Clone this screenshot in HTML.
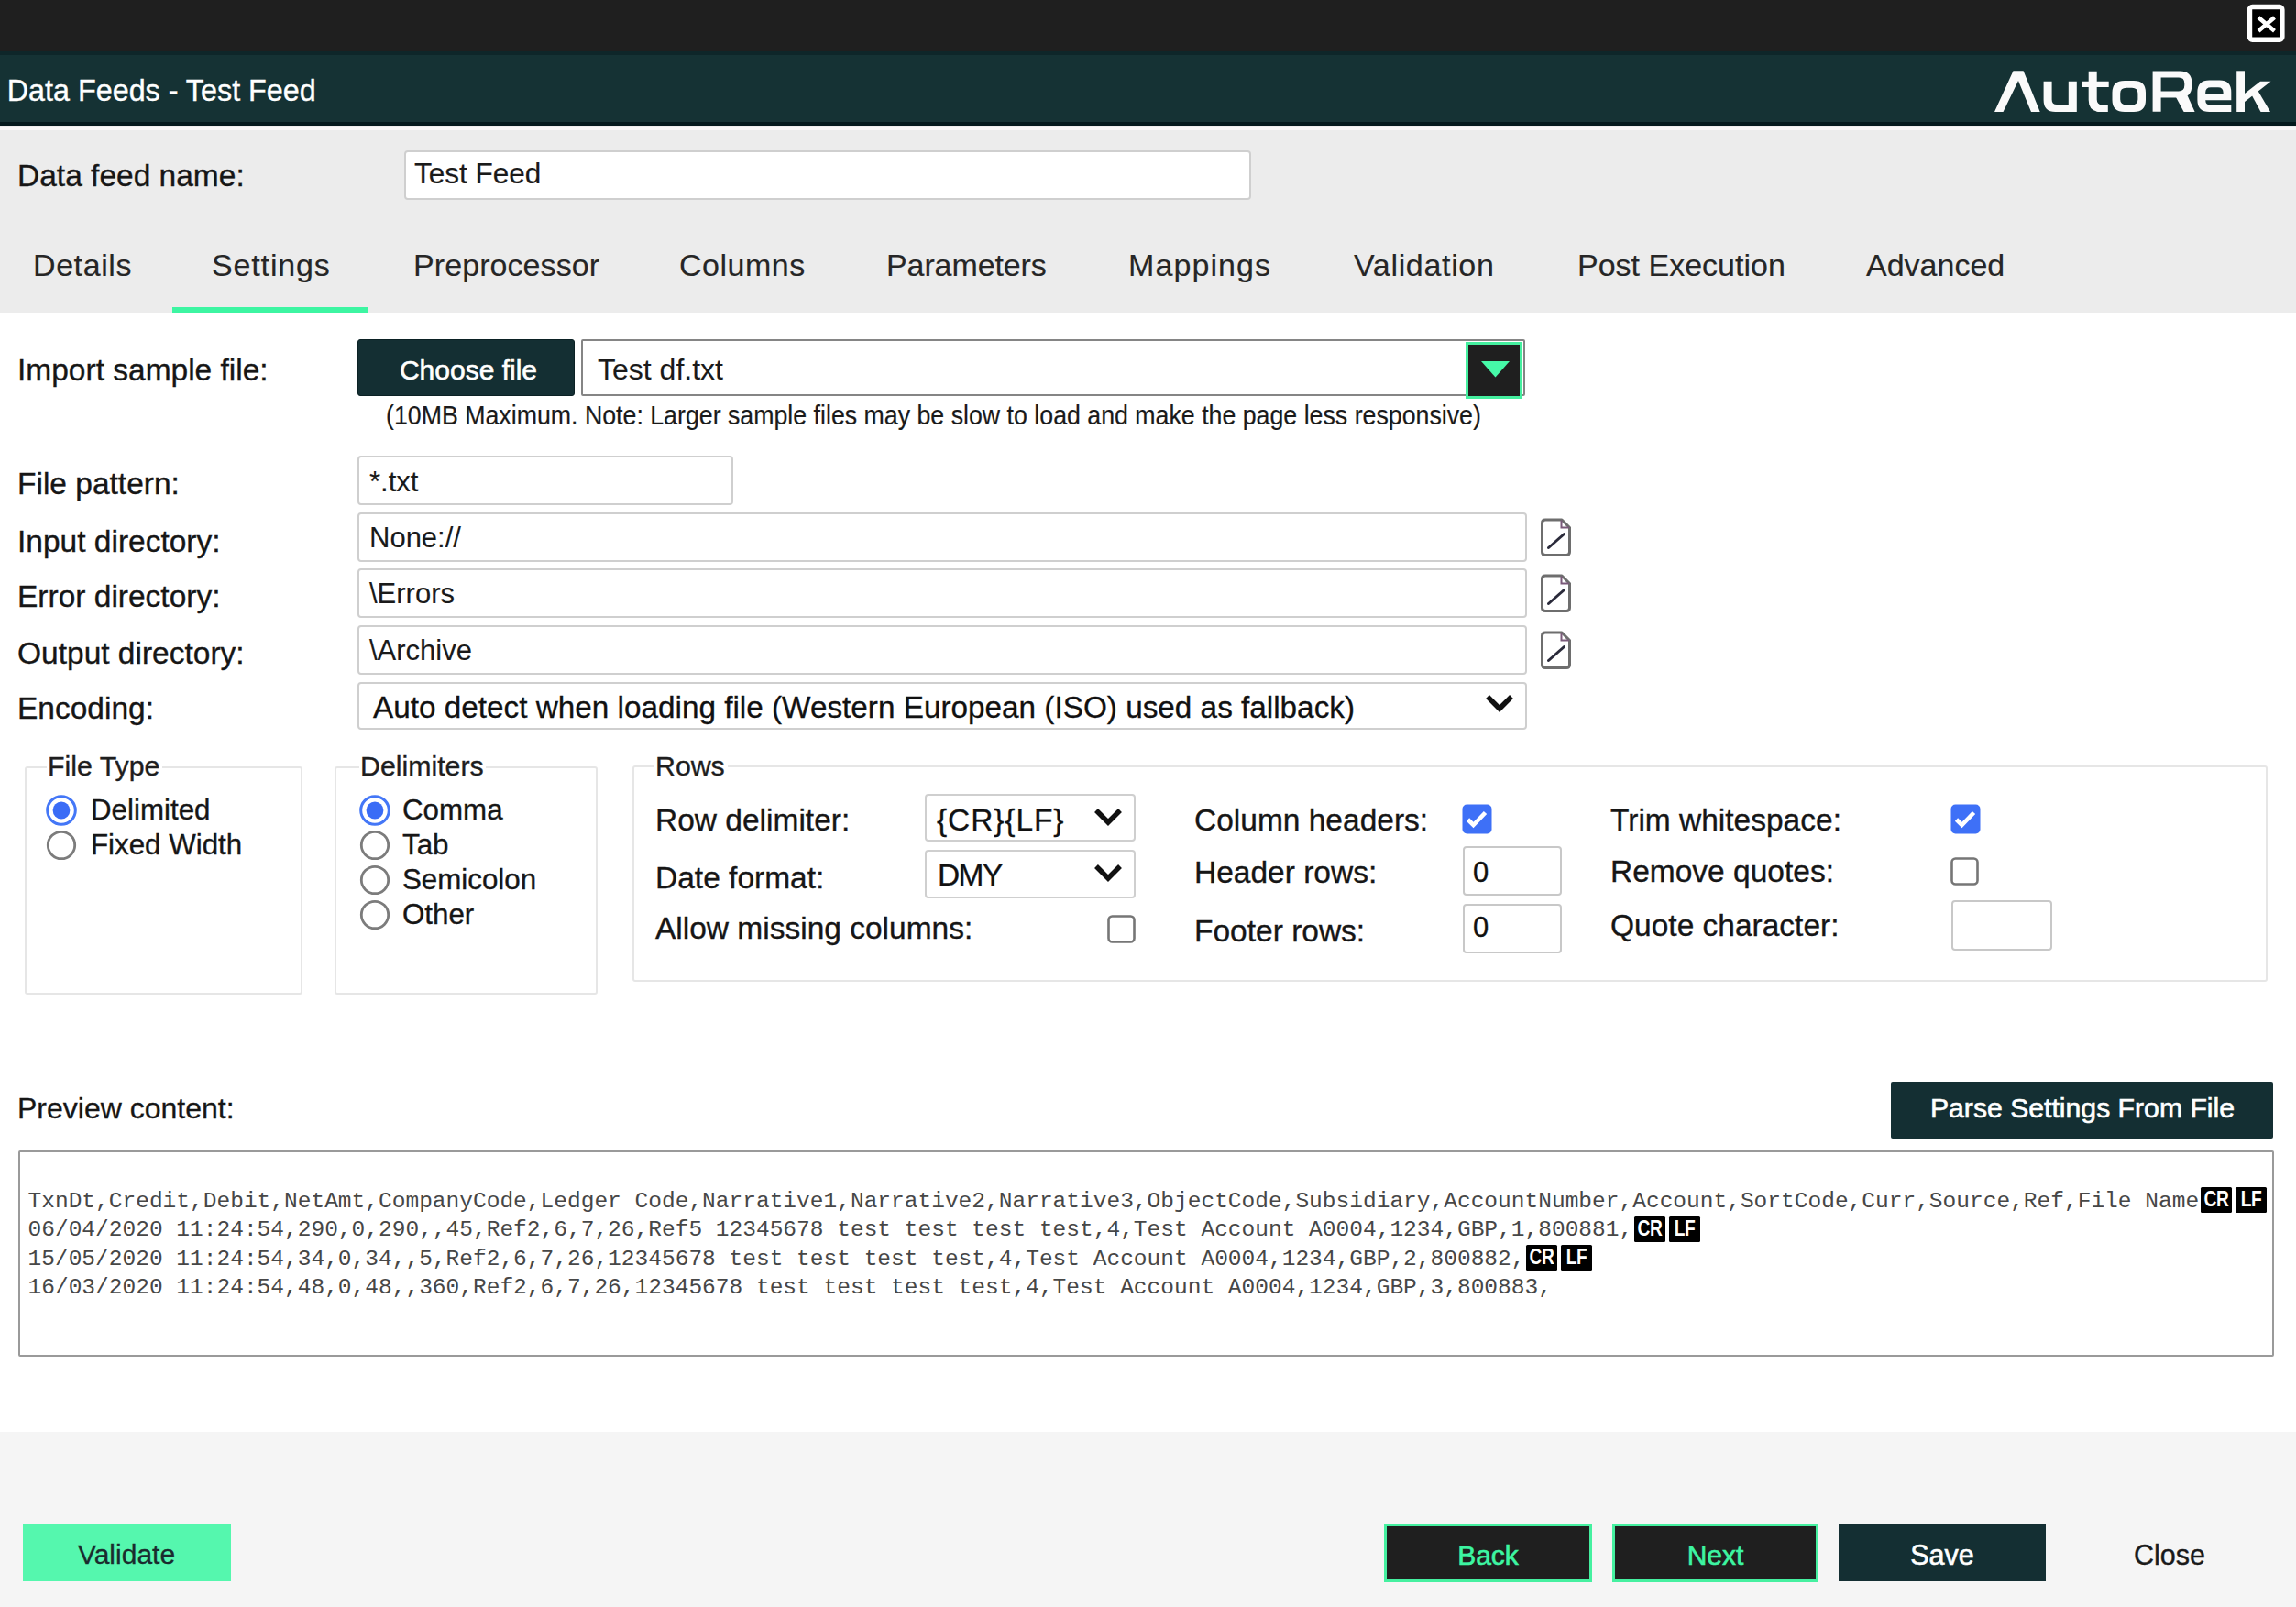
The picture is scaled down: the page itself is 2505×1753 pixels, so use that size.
<!DOCTYPE html>
<html><head><meta charset="utf-8"><title>Data Feeds - Test Feed</title>
<style>html,body{margin:0;padding:0;width:2505px;height:1753px;overflow:hidden;background:#fff;position:relative;font-family:'Liberation Sans', sans-serif}</style>
</head><body>
<div style="position:absolute;left:0px;top:0px;width:2505px;height:56px;box-sizing:border-box;background:#1f1f1f"></div>
<div style="position:absolute;left:0px;top:56px;width:2505px;height:78px;box-sizing:border-box;background:#153234"></div>
<div style="position:absolute;left:0px;top:56px;width:2505px;height:4px;box-sizing:border-box;background:#0e2629"></div>
<div style="position:absolute;left:0px;top:133px;width:2505px;height:4.5px;box-sizing:border-box;background:#03191c"></div>
<div style="position:absolute;left:0px;top:137px;width:2505px;height:204px;box-sizing:border-box;background:#ececec"></div>
<div style="position:absolute;left:0px;top:137.5px;width:2505px;height:4.0px;box-sizing:border-box;background:#f7f7f7"></div>
<div style="position:absolute;left:0px;top:1562px;width:2505px;height:191px;box-sizing:border-box;background:#f5f5f5"></div>
<svg style="position:absolute;left:2450px;top:2px" width="45" height="44" viewBox="0 0 45 44">
<rect x="4.45" y="5.55" width="35.4" height="35.7" rx="3" fill="#000" stroke="#fff" stroke-width="5.5"/>
<path d="M14,17 L31.5,31.7 M31.5,17 L14,31.7" stroke="#fff" stroke-width="4.5" stroke-linecap="butt"/>
</svg>
<div style="position:absolute;left:7.8px;top:82.55px;font-family:'Liberation Sans', sans-serif;font-size:32.3px;line-height:32.3px;color:#ffffff;white-space:nowrap;-webkit-text-stroke:0.35px #ffffff;">Data Feeds - Test Feed</div>
<svg style="position:absolute;left:0;top:0" width="2505" height="140" viewBox="0 0 2505 140">
<g fill="#fafafa" fill-rule="evenodd">
<path d="M2176,122 L2196.5,77.3 H2207.6 L2225.7,122 H2216 L2202,88 L2185.5,122 Z"/>
<path d="M2229.6,88.8 H2238.6 V108.5 Q2238.6,114 2244,114 H2256.8 V88.8 H2265.8 V122 H2242.5 Q2229.6,122 2229.6,109 Z"/>
<path d="M2278.7,77.7 H2287.7 V88.8 H2300.7 V95 H2287.7 V108.5 Q2287.7,114.3 2293.5,114.3 H2299.8 V122 H2292 Q2278.7,122 2278.7,109 V95 H2271.4 V88.8 H2278.7 Z"/>
<path d="M2318,88 H2328 Q2341,88 2341,101 V109 Q2341,122 2328,122 H2318 Q2304.5,122 2304.5,109 V101 Q2304.5,88 2318,88 Z M2320,95.8 Q2313.2,95.8 2313.2,102 V108.3 Q2313.2,114.4 2320,114.4 H2326 Q2332.4,114.4 2332.4,108.3 V102 Q2332.4,95.8 2326,95.8 Z"/>
<path d="M2348.6,77.5 H2378 Q2391.4,77.5 2391.4,90.5 V93 Q2391.4,106.5 2378,106.5 H2357.6 V121.8 H2348.6 Z M2357.6,84.6 V99.4 H2377 Q2383.3,99.4 2383.3,93 V91 Q2383.3,84.6 2377,84.6 Z"/>
<path d="M2374,106 L2386,103 L2394.6,122 H2382.6 Z"/>
<path d="M2434.3,122 H2410.5 Q2397.4,122 2397.4,109 V100.5 Q2397.4,87.4 2410.5,87.4 H2421.5 Q2434.3,87.4 2434.3,100.5 V109.2 H2406.2 Q2406.4,114.5 2411.5,114.5 H2434.3 Z M2406.2,102.2 H2425.6 V101 Q2425.6,95.2 2420,95.2 H2412 Q2406.2,95.2 2406.2,101 Z"/>
<path d="M2440.2,77.3 H2449 V122 H2440.2 Z"/>
<path d="M2447,103.5 L2466,88.8 H2477.5 L2449,111 Z"/>
<path d="M2455.5,101.5 L2462,96.5 L2477,122 H2466.5 Z"/>
</g></svg>
<div style="position:absolute;left:19px;top:175.03px;font-family:'Liberation Sans', sans-serif;font-size:33.5px;line-height:33.5px;color:#161616;white-space:nowrap;-webkit-text-stroke:0.35px #161616;">Data feed name:</div>
<div style="position:absolute;left:441px;top:164px;width:924px;height:54px;box-sizing:border-box;background:#fff;border:2px solid #cfcfcf;border-radius:4px"></div>
<div style="position:absolute;left:452px;top:174.22px;font-family:'Liberation Sans', sans-serif;font-size:31.5px;line-height:31.5px;color:#1a1a1a;white-space:nowrap;-webkit-text-stroke:0.2px #1a1a1a;">Test Feed</div>
<div style="position:absolute;left:36px;top:272.10px;font-family:'Liberation Sans', sans-serif;font-size:34px;line-height:34px;color:#262626;white-space:nowrap;-webkit-text-stroke:0.15px #262626;letter-spacing:0.58px">Details</div>
<div style="position:absolute;left:231px;top:272.10px;font-family:'Liberation Sans', sans-serif;font-size:34px;line-height:34px;color:#262626;white-space:nowrap;-webkit-text-stroke:0.15px #262626;letter-spacing:0.86px">Settings</div>
<div style="position:absolute;left:451px;top:272.10px;font-family:'Liberation Sans', sans-serif;font-size:34px;line-height:34px;color:#262626;white-space:nowrap;-webkit-text-stroke:0.15px #262626;letter-spacing:0.08px">Preprocessor</div>
<div style="position:absolute;left:741px;top:272.10px;font-family:'Liberation Sans', sans-serif;font-size:34px;line-height:34px;color:#262626;white-space:nowrap;-webkit-text-stroke:0.15px #262626;letter-spacing:0.5px">Columns</div>
<div style="position:absolute;left:967px;top:272.10px;font-family:'Liberation Sans', sans-serif;font-size:34px;line-height:34px;color:#262626;white-space:nowrap;-webkit-text-stroke:0.15px #262626;letter-spacing:-0.1px">Parameters</div>
<div style="position:absolute;left:1231px;top:272.10px;font-family:'Liberation Sans', sans-serif;font-size:34px;line-height:34px;color:#262626;white-space:nowrap;-webkit-text-stroke:0.15px #262626;letter-spacing:1.1px">Mappings</div>
<div style="position:absolute;left:1477px;top:272.10px;font-family:'Liberation Sans', sans-serif;font-size:34px;line-height:34px;color:#262626;white-space:nowrap;-webkit-text-stroke:0.15px #262626;letter-spacing:0.67px">Validation</div>
<div style="position:absolute;left:1721px;top:272.10px;font-family:'Liberation Sans', sans-serif;font-size:34px;line-height:34px;color:#262626;white-space:nowrap;-webkit-text-stroke:0.15px #262626;letter-spacing:0px">Post Execution</div>
<div style="position:absolute;left:2036px;top:272.10px;font-family:'Liberation Sans', sans-serif;font-size:34px;line-height:34px;color:#262626;white-space:nowrap;-webkit-text-stroke:0.15px #262626;letter-spacing:0px">Advanced</div>
<div style="position:absolute;left:188px;top:335px;width:214px;height:6px;box-sizing:border-box;background:#3df5a2"></div>
<div style="position:absolute;left:19px;top:386.52px;font-family:'Liberation Sans', sans-serif;font-size:33.5px;line-height:33.5px;color:#161616;white-space:nowrap;-webkit-text-stroke:0.35px #161616;">Import sample file:</div>
<div style="position:absolute;left:390px;top:370px;width:237px;height:62px;box-sizing:border-box;background:#142f33;border:1px solid #0b2124;border-radius:3px"></div>
<div style="position:absolute;left:-89px;width:1200px;text-align:center;top:388.50px;font-family:'Liberation Sans', sans-serif;font-size:30px;line-height:30px;color:#ffffff;white-space:nowrap;-webkit-text-stroke:0.6px #ffffff;">Choose file</div>
<div style="position:absolute;left:634px;top:370px;width:1030px;height:62px;box-sizing:border-box;background:#fff;border:2.6px solid #858585;border-radius:2px"></div>
<div style="position:absolute;left:652px;top:386.80px;font-family:'Liberation Sans', sans-serif;font-size:32px;line-height:32px;color:#1a1a1a;white-space:nowrap;-webkit-text-stroke:0.1px #1a1a1a;">Test df.txt</div>
<div style="position:absolute;left:1598.5px;top:373px;width:62.0px;height:61.5px;box-sizing:border-box;background:#1f1f1f;border:3px solid #45ef9f"></div>
<svg style="position:absolute;left:1615.5px;top:394px" width="31" height="18" viewBox="0 0 31 18"><path d="M0,0 H31 L15.5,17.5 Z" fill="#46f9a8"/></svg>
<div style="position:absolute;left:421px;top:438.85px;font-family:'Liberation Sans', sans-serif;font-size:29px;line-height:29px;color:#1a1a1a;white-space:nowrap;-webkit-text-stroke:0.2px #1a1a1a;transform-origin:0 0;transform:scaleX(0.922)">(10MB Maximum. Note: Larger sample files may be slow to load and make the page less responsive)</div>
<div style="position:absolute;left:19px;top:510.52px;font-family:'Liberation Sans', sans-serif;font-size:33.5px;line-height:33.5px;color:#161616;white-space:nowrap;-webkit-text-stroke:0.35px #161616;">File pattern:</div>
<div style="position:absolute;left:390px;top:497px;width:410px;height:54px;box-sizing:border-box;background:#fff;border:2px solid #cfcfcf;border-radius:4px"></div>
<div style="position:absolute;left:403px;top:509.65px;font-family:'Liberation Sans', sans-serif;font-size:31px;line-height:31px;color:#1a1a1a;white-space:nowrap;-webkit-text-stroke:0.1px #1a1a1a;">*.txt</div>
<div style="position:absolute;left:19px;top:574.02px;font-family:'Liberation Sans', sans-serif;font-size:33.5px;line-height:33.5px;color:#161616;white-space:nowrap;-webkit-text-stroke:0.35px #161616;">Input directory:</div>
<div style="position:absolute;left:390px;top:559px;width:1276px;height:54px;box-sizing:border-box;background:#fff;border:2px solid #cfcfcf;border-radius:4px"></div>
<div style="position:absolute;left:403px;top:570.65px;font-family:'Liberation Sans', sans-serif;font-size:31px;line-height:31px;color:#1a1a1a;white-space:nowrap;-webkit-text-stroke:0.1px #1a1a1a;">None://</div>
<svg style="position:absolute;left:1680px;top:565px" width="36" height="44" viewBox="0 0 36 44">
<path d="M2.5,5.5 Q2.5,2 6,2 H24 L32.5,10.5 V37 Q32.5,40.5 29,40.5 H6 Q2.5,40.5 2.5,37 Z" fill="#fff" stroke="#6e6e6e" stroke-width="3" stroke-linejoin="round"/>
<path d="M23.5,2.5 V10.5 H32" fill="none" stroke="#7a5a7a" stroke-width="2"/>
<path d="M9.5,32.5 L26.5,17.5" stroke="#2a2a3a" stroke-width="3" stroke-linecap="round"/>
</svg>
<div style="position:absolute;left:19px;top:633.52px;font-family:'Liberation Sans', sans-serif;font-size:33.5px;line-height:33.5px;color:#161616;white-space:nowrap;-webkit-text-stroke:0.35px #161616;">Error directory:</div>
<div style="position:absolute;left:390px;top:620px;width:1276px;height:54px;box-sizing:border-box;background:#fff;border:2px solid #cfcfcf;border-radius:4px"></div>
<div style="position:absolute;left:403px;top:631.65px;font-family:'Liberation Sans', sans-serif;font-size:31px;line-height:31px;color:#1a1a1a;white-space:nowrap;-webkit-text-stroke:0.1px #1a1a1a;">\Errors</div>
<svg style="position:absolute;left:1680px;top:626px" width="36" height="44" viewBox="0 0 36 44">
<path d="M2.5,5.5 Q2.5,2 6,2 H24 L32.5,10.5 V37 Q32.5,40.5 29,40.5 H6 Q2.5,40.5 2.5,37 Z" fill="#fff" stroke="#6e6e6e" stroke-width="3" stroke-linejoin="round"/>
<path d="M23.5,2.5 V10.5 H32" fill="none" stroke="#7a5a7a" stroke-width="2"/>
<path d="M9.5,32.5 L26.5,17.5" stroke="#2a2a3a" stroke-width="3" stroke-linecap="round"/>
</svg>
<div style="position:absolute;left:19px;top:695.52px;font-family:'Liberation Sans', sans-serif;font-size:33.5px;line-height:33.5px;color:#161616;white-space:nowrap;-webkit-text-stroke:0.35px #161616;">Output directory:</div>
<div style="position:absolute;left:390px;top:682px;width:1276px;height:54px;box-sizing:border-box;background:#fff;border:2px solid #cfcfcf;border-radius:4px"></div>
<div style="position:absolute;left:403px;top:693.65px;font-family:'Liberation Sans', sans-serif;font-size:31px;line-height:31px;color:#1a1a1a;white-space:nowrap;-webkit-text-stroke:0.1px #1a1a1a;">\Archive</div>
<svg style="position:absolute;left:1680px;top:688px" width="36" height="44" viewBox="0 0 36 44">
<path d="M2.5,5.5 Q2.5,2 6,2 H24 L32.5,10.5 V37 Q32.5,40.5 29,40.5 H6 Q2.5,40.5 2.5,37 Z" fill="#fff" stroke="#6e6e6e" stroke-width="3" stroke-linejoin="round"/>
<path d="M23.5,2.5 V10.5 H32" fill="none" stroke="#7a5a7a" stroke-width="2"/>
<path d="M9.5,32.5 L26.5,17.5" stroke="#2a2a3a" stroke-width="3" stroke-linecap="round"/>
</svg>
<div style="position:absolute;left:19px;top:755.52px;font-family:'Liberation Sans', sans-serif;font-size:33.5px;line-height:33.5px;color:#161616;white-space:nowrap;-webkit-text-stroke:0.35px #161616;">Encoding:</div>
<div style="position:absolute;left:390px;top:744px;width:1276px;height:52px;box-sizing:border-box;background:#fff;border:2px solid #cfcfcf;border-radius:4px"></div>
<div style="position:absolute;left:407px;top:755.20px;font-family:'Liberation Sans', sans-serif;font-size:33.3px;line-height:33.3px;color:#111;white-space:nowrap;-webkit-text-stroke:0.3px #111;">Auto detect when loading file (Western European (ISO) used as fallback)</div>
<svg style="position:absolute;left:1618px;top:755px" width="36" height="26" viewBox="0 0 36 26"><path d="M5,5 L18,18 L31,5" fill="none" stroke="#111" stroke-width="5.5"/></svg>
<div style="position:absolute;left:27px;top:836px;width:303px;height:249px;box-sizing:border-box;border:2px solid #e6e6e6;border-radius:3px"></div>
<div style="position:absolute;left:51px;top:832px;width:126px;height:10px;box-sizing:border-box;background:#fff"></div>
<div style="position:absolute;left:52px;top:821.25px;font-family:'Liberation Sans', sans-serif;font-size:30.3px;line-height:30.3px;color:#1e1e1e;white-space:nowrap;-webkit-text-stroke:0.35px #1e1e1e;">File Type</div>
<div style="position:absolute;left:365px;top:836px;width:287px;height:249px;box-sizing:border-box;border:2px solid #e6e6e6;border-radius:3px"></div>
<div style="position:absolute;left:392px;top:832px;width:138px;height:10px;box-sizing:border-box;background:#fff"></div>
<div style="position:absolute;left:393px;top:821.25px;font-family:'Liberation Sans', sans-serif;font-size:30.3px;line-height:30.3px;color:#1e1e1e;white-space:nowrap;-webkit-text-stroke:0.35px #1e1e1e;">Delimiters</div>
<div style="position:absolute;left:690px;top:835px;width:1784px;height:236px;box-sizing:border-box;border:2px solid #e6e6e6;border-radius:3px"></div>
<div style="position:absolute;left:714px;top:831px;width:80px;height:10px;box-sizing:border-box;background:#fff"></div>
<div style="position:absolute;left:715px;top:821.25px;font-family:'Liberation Sans', sans-serif;font-size:30.3px;line-height:30.3px;color:#1e1e1e;white-space:nowrap;-webkit-text-stroke:0.35px #1e1e1e;">Rows</div>
<svg style="position:absolute;left:49.3px;top:865.8px" width="36" height="36" viewBox="0 0 36 36"><circle cx="18" cy="18" r="15.3" fill="#fff" stroke="#4477f7" stroke-width="3"/><circle cx="18" cy="18" r="9.4" fill="#3a6cf6"/></svg>
<div style="position:absolute;left:99px;top:867.89px;font-family:'Liberation Sans', sans-serif;font-size:31.3px;line-height:31.3px;color:#161616;white-space:nowrap;-webkit-text-stroke:0.35px #161616;">Delimited</div>
<svg style="position:absolute;left:49px;top:903.8px" width="36" height="36" viewBox="0 0 36 36"><circle cx="18" cy="18" r="14.7" fill="#fff" stroke="#7c7c7c" stroke-width="2.8"/></svg>
<div style="position:absolute;left:99px;top:905.89px;font-family:'Liberation Sans', sans-serif;font-size:31.3px;line-height:31.3px;color:#161616;white-space:nowrap;-webkit-text-stroke:0.35px #161616;">Fixed Width</div>
<svg style="position:absolute;left:390.8px;top:865.8px" width="36" height="36" viewBox="0 0 36 36"><circle cx="18" cy="18" r="15.3" fill="#fff" stroke="#4477f7" stroke-width="3"/><circle cx="18" cy="18" r="9.4" fill="#3a6cf6"/></svg>
<div style="position:absolute;left:439px;top:867.89px;font-family:'Liberation Sans', sans-serif;font-size:31.3px;line-height:31.3px;color:#161616;white-space:nowrap;-webkit-text-stroke:0.35px #161616;">Comma</div>
<svg style="position:absolute;left:390.8px;top:903.8px" width="36" height="36" viewBox="0 0 36 36"><circle cx="18" cy="18" r="14.7" fill="#fff" stroke="#7c7c7c" stroke-width="2.8"/></svg>
<div style="position:absolute;left:439px;top:905.89px;font-family:'Liberation Sans', sans-serif;font-size:31.3px;line-height:31.3px;color:#161616;white-space:nowrap;-webkit-text-stroke:0.35px #161616;">Tab</div>
<svg style="position:absolute;left:390.8px;top:941.8px" width="36" height="36" viewBox="0 0 36 36"><circle cx="18" cy="18" r="14.7" fill="#fff" stroke="#7c7c7c" stroke-width="2.8"/></svg>
<div style="position:absolute;left:439px;top:943.89px;font-family:'Liberation Sans', sans-serif;font-size:31.3px;line-height:31.3px;color:#161616;white-space:nowrap;-webkit-text-stroke:0.35px #161616;">Semicolon</div>
<svg style="position:absolute;left:390.8px;top:979.8px" width="36" height="36" viewBox="0 0 36 36"><circle cx="18" cy="18" r="14.7" fill="#fff" stroke="#7c7c7c" stroke-width="2.8"/></svg>
<div style="position:absolute;left:439px;top:981.89px;font-family:'Liberation Sans', sans-serif;font-size:31.3px;line-height:31.3px;color:#161616;white-space:nowrap;-webkit-text-stroke:0.35px #161616;">Other</div>
<div style="position:absolute;left:715px;top:878.02px;font-family:'Liberation Sans', sans-serif;font-size:33.5px;line-height:33.5px;color:#161616;white-space:nowrap;-webkit-text-stroke:0.35px #161616;">Row delimiter:</div>
<div style="position:absolute;left:1009px;top:866px;width:230px;height:52px;box-sizing:border-box;background:#fff;border:2px solid #cfcfcf;border-radius:4px"></div>
<div style="position:absolute;left:1022px;top:877.52px;font-family:'Liberation Sans', sans-serif;font-size:33.5px;line-height:33.5px;color:#111;white-space:nowrap;-webkit-text-stroke:0.3px #111;letter-spacing:0.9px">{CR}{LF}</div>
<svg style="position:absolute;left:1191px;top:879px" width="36" height="26" viewBox="0 0 36 26"><path d="M5,5 L18,18 L31,5" fill="none" stroke="#111" stroke-width="5.5"/></svg>
<div style="position:absolute;left:715px;top:940.52px;font-family:'Liberation Sans', sans-serif;font-size:33.5px;line-height:33.5px;color:#161616;white-space:nowrap;-webkit-text-stroke:0.35px #161616;">Date format:</div>
<div style="position:absolute;left:1009px;top:927px;width:230px;height:53px;box-sizing:border-box;background:#fff;border:2px solid #cfcfcf;border-radius:4px"></div>
<div style="position:absolute;left:1023px;top:938.02px;font-family:'Liberation Sans', sans-serif;font-size:33.5px;line-height:33.5px;color:#111;white-space:nowrap;-webkit-text-stroke:0.3px #111;letter-spacing:-1.6px">DMY</div>
<svg style="position:absolute;left:1191px;top:940px" width="36" height="26" viewBox="0 0 36 26"><path d="M5,5 L18,18 L31,5" fill="none" stroke="#111" stroke-width="5.5"/></svg>
<div style="position:absolute;left:715px;top:995.52px;font-family:'Liberation Sans', sans-serif;font-size:33.5px;line-height:33.5px;color:#161616;white-space:nowrap;-webkit-text-stroke:0.35px #161616;">Allow missing columns:</div>
<svg style="position:absolute;left:1208px;top:998px" width="31" height="31" viewBox="0 0 31 31"><rect x="1.5" y="1.5" width="28" height="28" rx="4" fill="#fff" stroke="#767676" stroke-width="2.6"/></svg>
<div style="position:absolute;left:1303px;top:877.52px;font-family:'Liberation Sans', sans-serif;font-size:33.5px;line-height:33.5px;color:#161616;white-space:nowrap;-webkit-text-stroke:0.35px #161616;">Column headers:</div>
<svg style="position:absolute;left:1594.8px;top:877px" width="33" height="33" viewBox="0 0 33 33"><rect x="0.5" y="0.5" width="32" height="32" rx="5" fill="#3e70f7"/><path d="M6.5,17 L12.5,23 L25.5,9.5" fill="none" stroke="#fff" stroke-width="4.6"/></svg>
<div style="position:absolute;left:1303px;top:934.52px;font-family:'Liberation Sans', sans-serif;font-size:33.5px;line-height:33.5px;color:#161616;white-space:nowrap;-webkit-text-stroke:0.35px #161616;">Header rows:</div>
<div style="position:absolute;left:1596px;top:923px;width:108px;height:54px;box-sizing:border-box;background:#fff;border:2px solid #c8c8c8;border-radius:4px"></div>
<div style="position:absolute;left:1607px;top:935.65px;font-family:'Liberation Sans', sans-serif;font-size:31px;line-height:31px;color:#111;white-space:nowrap;-webkit-text-stroke:0.3px #111;">0</div>
<div style="position:absolute;left:1303px;top:998.52px;font-family:'Liberation Sans', sans-serif;font-size:33.5px;line-height:33.5px;color:#161616;white-space:nowrap;-webkit-text-stroke:0.35px #161616;">Footer rows:</div>
<div style="position:absolute;left:1596px;top:986px;width:108px;height:54px;box-sizing:border-box;background:#fff;border:2px solid #c8c8c8;border-radius:4px"></div>
<div style="position:absolute;left:1607px;top:996.35px;font-family:'Liberation Sans', sans-serif;font-size:31px;line-height:31px;color:#111;white-space:nowrap;-webkit-text-stroke:0.3px #111;">0</div>
<div style="position:absolute;left:1757px;top:878.02px;font-family:'Liberation Sans', sans-serif;font-size:33.5px;line-height:33.5px;color:#161616;white-space:nowrap;-webkit-text-stroke:0.35px #161616;">Trim whitespace:</div>
<svg style="position:absolute;left:2127.5px;top:877px" width="33" height="33" viewBox="0 0 33 33"><rect x="0.5" y="0.5" width="32" height="32" rx="5" fill="#3e70f7"/><path d="M6.5,17 L12.5,23 L25.5,9.5" fill="none" stroke="#fff" stroke-width="4.6"/></svg>
<div style="position:absolute;left:1757px;top:934.02px;font-family:'Liberation Sans', sans-serif;font-size:33.5px;line-height:33.5px;color:#161616;white-space:nowrap;-webkit-text-stroke:0.35px #161616;">Remove quotes:</div>
<svg style="position:absolute;left:2128px;top:935px" width="31" height="31" viewBox="0 0 31 31"><rect x="1.5" y="1.5" width="28" height="28" rx="4" fill="#fff" stroke="#767676" stroke-width="2.6"/></svg>
<div style="position:absolute;left:1757px;top:993.02px;font-family:'Liberation Sans', sans-serif;font-size:33.5px;line-height:33.5px;color:#161616;white-space:nowrap;-webkit-text-stroke:0.35px #161616;">Quote character:</div>
<div style="position:absolute;left:2129px;top:982px;width:110px;height:55px;box-sizing:border-box;background:#fff;border:2px solid #c8c8c8;border-radius:4px"></div>
<div style="position:absolute;left:19px;top:1192.80px;font-family:'Liberation Sans', sans-serif;font-size:32px;line-height:32px;color:#161616;white-space:nowrap;-webkit-text-stroke:0.3px #161616;">Preview content:</div>
<div style="position:absolute;left:2063px;top:1180px;width:417px;height:62px;box-sizing:border-box;background:#142f33;border-radius:2px"></div>
<div style="position:absolute;left:1672px;width:1200px;text-align:center;top:1194.33px;font-family:'Liberation Sans', sans-serif;font-size:30.2px;line-height:30.2px;color:#ffffff;white-space:nowrap;-webkit-text-stroke:0.6px #ffffff;">Parse Settings From File</div>
<div style="position:absolute;left:19.5px;top:1255px;width:2461.0px;height:225px;box-sizing:border-box;background:#fff;border:2.7px solid #9a9a9a;border-radius:2px"></div>
<div style="position:absolute;left:30.5px;top:1298.88px;font-family:'Liberation Mono', monospace;font-size:24.525000000000002px;line-height:24.525000000000002px;color:#474747;white-space:nowrap;">TxnDt,Credit,Debit,NetAmt,CompanyCode,Ledger Code,Narrative1,Narrative2,Narrative3,ObjectCode,Subsidiary,AccountNumber,Account,SortCode,Curr,Source,Ref,File Name</div>
<div style="position:absolute;left:2400.615px;top:1295.0px;width:34.0px;height:28.0px;box-sizing:border-box;background:#000;border-radius:1.5px"></div>
<div style="position:absolute;left:2380.615px;top:1295.0px;width:74px;height:28px;text-align:center;font:bold 24px/26px 'Liberation Sans', sans-serif;color:#fff;transform:scaleX(0.8);letter-spacing:-0.5px">CR</div>
<div style="position:absolute;left:2438.8149999999996px;top:1295.0px;width:34.0px;height:28.0px;box-sizing:border-box;background:#000;border-radius:1.5px"></div>
<div style="position:absolute;left:2418.8149999999996px;top:1295.0px;width:74px;height:28px;text-align:center;font:bold 24px/26px 'Liberation Sans', sans-serif;color:#fff;transform:scaleX(0.8);letter-spacing:-0.5px">LF</div>
<div style="position:absolute;left:30.5px;top:1330.38px;font-family:'Liberation Mono', monospace;font-size:24.525000000000002px;line-height:24.525000000000002px;color:#474747;white-space:nowrap;">06/04/2020 11:24:54,290,0,290,,45,Ref2,6,7,26,Ref5 12345678 test test test test,4,Test Account A0004,1234,GBP,1,800881,</div>
<div style="position:absolute;left:1782.585px;top:1326.5px;width:34.0px;height:28.0px;box-sizing:border-box;background:#000;border-radius:1.5px"></div>
<div style="position:absolute;left:1762.585px;top:1326.5px;width:74px;height:28px;text-align:center;font:bold 24px/26px 'Liberation Sans', sans-serif;color:#fff;transform:scaleX(0.8);letter-spacing:-0.5px">CR</div>
<div style="position:absolute;left:1820.785px;top:1326.5px;width:34.0px;height:28.0px;box-sizing:border-box;background:#000;border-radius:1.5px"></div>
<div style="position:absolute;left:1800.785px;top:1326.5px;width:74px;height:28px;text-align:center;font:bold 24px/26px 'Liberation Sans', sans-serif;color:#fff;transform:scaleX(0.8);letter-spacing:-0.5px">LF</div>
<div style="position:absolute;left:30.5px;top:1361.88px;font-family:'Liberation Mono', monospace;font-size:24.525000000000002px;line-height:24.525000000000002px;color:#474747;white-space:nowrap;">15/05/2020 11:24:54,34,0,34,,5,Ref2,6,7,26,12345678 test test test test,4,Test Account A0004,1234,GBP,2,800882,</div>
<div style="position:absolute;left:1664.865px;top:1358.0px;width:34.0px;height:28.0px;box-sizing:border-box;background:#000;border-radius:1.5px"></div>
<div style="position:absolute;left:1644.865px;top:1358.0px;width:74px;height:28px;text-align:center;font:bold 24px/26px 'Liberation Sans', sans-serif;color:#fff;transform:scaleX(0.8);letter-spacing:-0.5px">CR</div>
<div style="position:absolute;left:1703.065px;top:1358.0px;width:34.0px;height:28.0px;box-sizing:border-box;background:#000;border-radius:1.5px"></div>
<div style="position:absolute;left:1683.065px;top:1358.0px;width:74px;height:28px;text-align:center;font:bold 24px/26px 'Liberation Sans', sans-serif;color:#fff;transform:scaleX(0.8);letter-spacing:-0.5px">LF</div>
<div style="position:absolute;left:30.5px;top:1393.38px;font-family:'Liberation Mono', monospace;font-size:24.525000000000002px;line-height:24.525000000000002px;color:#474747;white-space:nowrap;">16/03/2020 11:24:54,48,0,48,,360,Ref2,6,7,26,12345678 test test test test,4,Test Account A0004,1234,GBP,3,800883,</div>
<div style="position:absolute;left:25px;top:1662px;width:227px;height:63px;box-sizing:border-box;background:#55f7ae"></div>
<div style="position:absolute;left:-462px;width:1200px;text-align:center;top:1681.00px;font-family:'Liberation Sans', sans-serif;font-size:30px;line-height:30px;color:#1a2c2e;white-space:nowrap;-webkit-text-stroke:0.3px #1a2c2e;">Validate</div>
<div style="position:absolute;left:1510px;top:1662px;width:226.5px;height:63.5px;box-sizing:border-box;background:#1f1f1f;border:3px solid #45f0a0"></div>
<div style="position:absolute;left:1023.5px;width:1200px;text-align:center;top:1681.50px;font-family:'Liberation Sans', sans-serif;font-size:30px;line-height:30px;color:#3df5a2;white-space:nowrap;-webkit-text-stroke:0.6px #3df5a2;">Back</div>
<div style="position:absolute;left:1759px;top:1662px;width:225px;height:63.5px;box-sizing:border-box;background:#1f1f1f;border:3px solid #45f0a0"></div>
<div style="position:absolute;left:1271.5px;width:1200px;text-align:center;top:1681.50px;font-family:'Liberation Sans', sans-serif;font-size:30px;line-height:30px;color:#3df5a2;white-space:nowrap;-webkit-text-stroke:0.6px #3df5a2;">Next</div>
<div style="position:absolute;left:2006px;top:1662px;width:226px;height:63px;box-sizing:border-box;background:#142f33"></div>
<div style="position:absolute;left:1519px;width:1200px;text-align:center;top:1681.08px;font-family:'Liberation Sans', sans-serif;font-size:30.5px;line-height:30.5px;color:#ffffff;white-space:nowrap;-webkit-text-stroke:0.6px #ffffff;">Save</div>
<div style="position:absolute;left:1767px;width:1200px;text-align:center;top:1681.08px;font-family:'Liberation Sans', sans-serif;font-size:30.5px;line-height:30.5px;color:#1a1a1a;white-space:nowrap;-webkit-text-stroke:0.35px #1a1a1a;">Close</div>
</body></html>
